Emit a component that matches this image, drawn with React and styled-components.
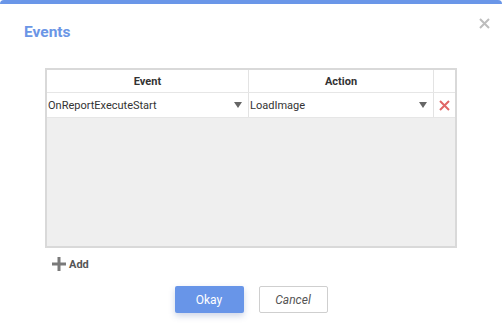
import styled, { createGlobalStyle } from "styled-components";

const GlobalStyle = createGlobalStyle`
  html, body {
    margin: 0;
    padding: 0;
    background: #fff;
  }
  body {
    font-family: Roboto, "Liberation Sans", sans-serif;
  }
`;

const Dialog = styled.div`
  width: 502px;
  height: 327px;
  box-sizing: border-box;
  border-top: 4px solid #6a96e8;
  border-radius: 4px 4px 0 0;
  background: #fff;
  position: relative;
  display: flex;
  flex-direction: column;
`;

const Title = styled.h1`
  margin: 0;
  padding: 19px 0 0 24px;
  font-size: 15.5px;
  font-weight: 700;
  color: #6b96e6;
  line-height: 18px;
`;

const CloseButton = styled.button`
  position: absolute;
  top: 8px;
  right: 7px;
  width: 22px;
  height: 22px;
  padding: 0;
  border: none;
  background: none;
  display: flex;
  align-items: center;
  justify-content: center;
`;

const Grid = styled.div`
  margin: 27px 0 0 45px;
  width: 412px;
  height: 180px;
  box-sizing: border-box;
  border: 2px solid #d9d9d9;
  background: #efefef;
  display: flex;
  flex-direction: column;
`;

const Row = styled.div`
  display: grid;
  grid-template-columns: 202px 185px 1fr;
  background: #fff;
  height: ${(p) => p.h}px;
  border-bottom: 1px solid #e6e6e6;
`;

const HeadCell = styled.div`
  display: flex;
  align-items: center;
  justify-content: center;
  font-size: 11px;
  font-weight: 700;
  color: #333;
  border-right: ${(p) => (p.last ? "none" : "1px solid #e3e3e3")};
`;

const Cell = styled.div`
  display: flex;
  align-items: center;
  justify-content: space-between;
  padding: 0 6px 0 1px;
  font-size: 11px;
  color: #333;
  border-right: ${(p) => (p.last ? "none" : "1px solid #e3e3e3")};
`;

const Caret = styled.span`
  width: 0;
  height: 0;
  border-left: 4.5px solid transparent;
  border-right: 4.5px solid transparent;
  border-top: 6px solid #666;
`;

const DeleteCell = styled.div`
  display: flex;
  align-items: center;
  justify-content: center;
`;

const AddButton = styled.button`
  margin: 9px 0 0 52px;
  padding: 0;
  border: none;
  background: none;
  display: flex;
  align-items: center;
  gap: 3px;
  align-self: flex-start;
  font-family: inherit;
  font-size: 11px;
  font-weight: 700;
  color: #555;
`;

const Footer = styled.div`
  display: flex;
  justify-content: center;
  gap: 15px;
  margin-top: 15px;
`;

const OkButton = styled.button`
  width: 69px;
  height: 27px;
  border: none;
  border-radius: 2px;
  background: #6895e8;
  color: #fff;
  font-family: inherit;
  font-size: 12px;
  box-shadow: 0 3px 6px rgba(60, 90, 160, 0.25);
`;

const CancelButton = styled.button`
  width: 69px;
  height: 27px;
  box-sizing: border-box;
  border: 1px solid #cfcfcf;
  border-radius: 2px;
  background: #fff;
  color: #555;
  font-family: inherit;
  font-style: italic;
  font-size: 12px;
`;

const App = () => {
  return (
    <>
      <GlobalStyle />
      <Dialog>
        <Title>Events</Title>
        <CloseButton>
          <svg width="11" height="11" viewBox="0 0 11 11">
            <path d="M1 1L10 10M10 1L1 10" stroke="#bdbdbd" strokeWidth="2" />
          </svg>
        </CloseButton>
        <Grid>
          <Row h={22}>
            <HeadCell>Event</HeadCell>
            <HeadCell>Action</HeadCell>
            <HeadCell last />
          </Row>
          <Row h={24}>
            <Cell>
              OnReportExecuteStart
              <Caret />
            </Cell>
            <Cell>
              LoadImage
              <Caret />
            </Cell>
            <DeleteCell>
              <svg width="11" height="11" viewBox="0 0 11 11">
                <path d="M1 1L10 10M10 1L1 10" stroke="#e06666" strokeWidth="2" />
              </svg>
            </DeleteCell>
          </Row>
        </Grid>
        <AddButton>
          <svg width="14" height="14" viewBox="0 0 14 14">
            <path d="M5.5 0h3v5.5H14v3H8.5V14h-3V8.5H0v-3h5.5z" fill="#7a7a7a" />
          </svg>
          Add
        </AddButton>
        <Footer>
          <OkButton>Okay</OkButton>
          <CancelButton>Cancel</CancelButton>
        </Footer>
      </Dialog>
    </>
  );
};

export default App;
